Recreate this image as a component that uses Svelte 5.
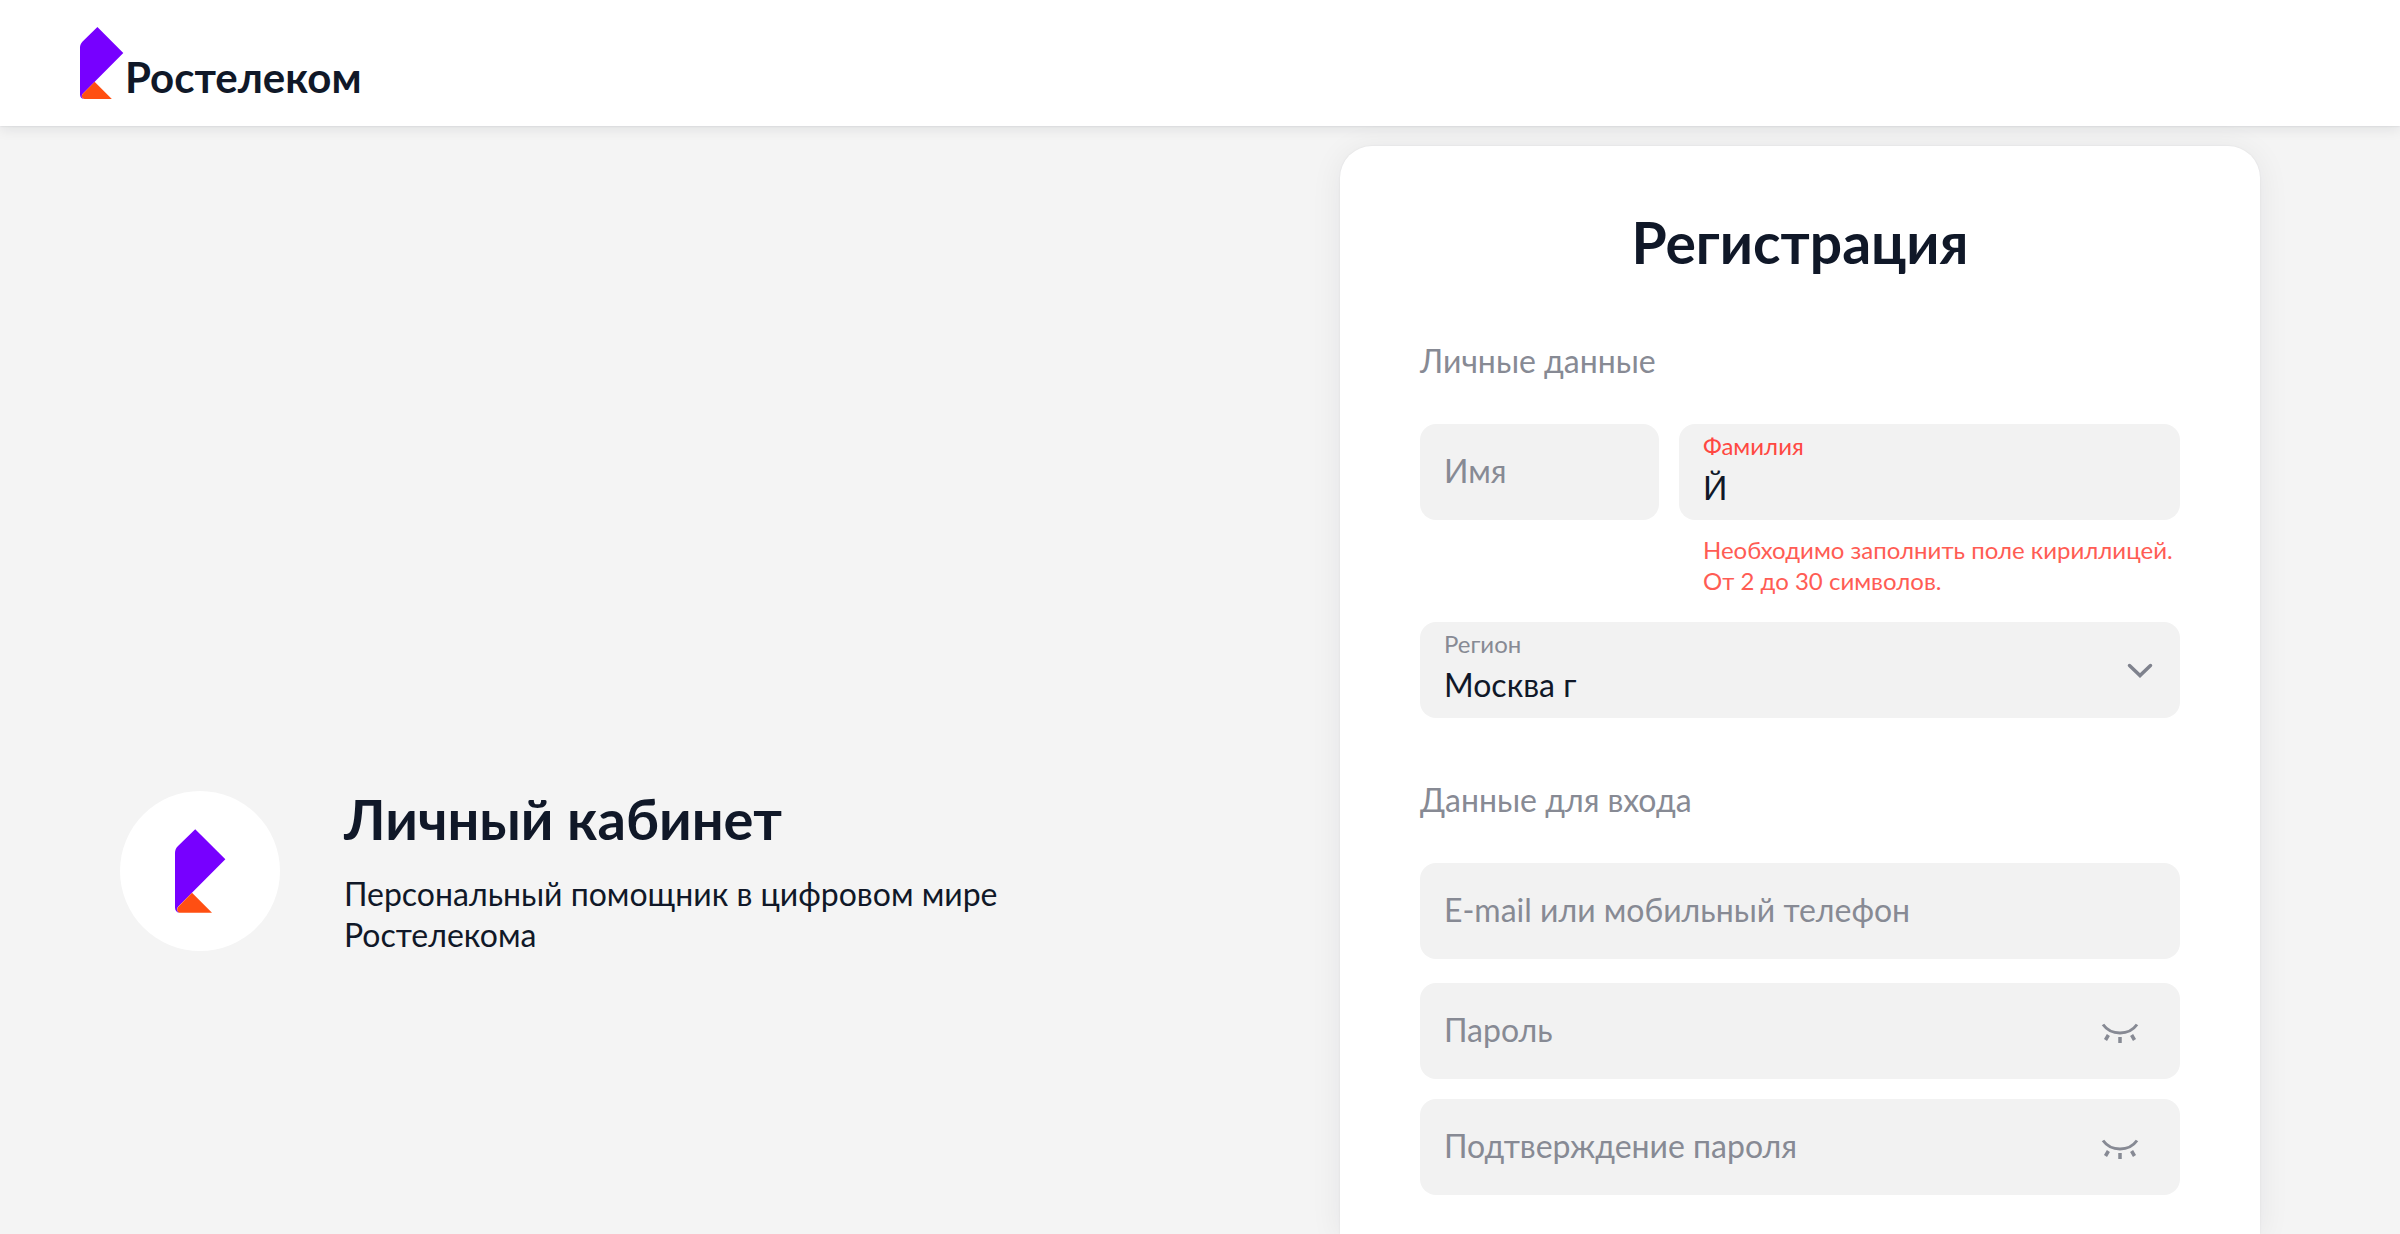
<script>
  let firstName = $state('');
  let lastName = $state('Й');
  let region = $state('Москва г');
  let login = $state('');
  let password = $state('');
  let passwordRepeat = $state('');
  let showPassword = $state(false);
  let showRepeat = $state(false);
</script>

{#snippet mark()}
  <svg class="mark" viewBox="0 0 43 72" aria-hidden="true">
    <path fill="#7700ff" d="M17.4 0 43.3 26 3 66.4c-2 2-1.4 4.2.6 5.6C1.4 71.6 0 69.8 0 67.4V20.8c0-2.6.8-4.6 2.6-6.4z" />
    <path fill="#ff4f12" d="M14.6 54.700 31.800 72H4.600c-2.600 0-3.600-3-1.800-5.200z" />
  </svg>
{/snippet}

{#snippet eye()}
  <svg viewBox="0 0 48 48" fill="none" stroke="#878a94" aria-hidden="true">
    <path stroke-width="3" d="M7 17.5C15 28.8 33 28.8 41 17.5" />
    <path stroke-width="3.5" d="M24 30v6M12.4 28 9.5 33M35.6 28 38.5 33" />
  </svg>
{/snippet}

<div class="page">
  <header class="header">
    <a class="logo" href="/">
      {@render mark()}
      <span>Ростелеком</span>
    </a>
  </header>

  <main class="main">
    <section class="about">
      <div class="badge">{@render mark()}</div>
      <div class="about-text">
        <h2>Личный кабинет</h2>
        <p>Персональный помощник в цифровом мире Ростелекома</p>
      </div>
    </section>

    <section class="card">
      <h1>Регистрация</h1>
      <form>
        <h3>Личные данные</h3>
        <div class="names">
          <div class="field">
            <input type="text" aria-label="Имя" placeholder="Имя" bind:value={firstName} />
          </div>
          <div>
            <div class="field filled invalid">
              <div class="stack">
                <label for="last-name">Фамилия</label>
                <input id="last-name" type="text" aria-describedby="last-name-error" bind:value={lastName} />
              </div>
            </div>
            <p class="error" id="last-name-error">Необходимо заполнить поле кириллицей. От 2 до 30 символов.</p>
          </div>
        </div>
        <div class="field filled">
          <div class="stack">
            <label for="region">Регион</label>
            <select id="region" bind:value={region}>
              <option>Москва г</option>
            </select>
          </div>
          <svg class="chevron" viewBox="0 0 32 32" fill="none" stroke="#7f828d" stroke-width="3.5" stroke-linecap="round" aria-hidden="true">
            <path d="M5.5 11.5 16 21.5 26.5 11.5" />
          </svg>
        </div>

        <h3 class="second">Данные для входа</h3>
        <div class="field">
          <input type="text" aria-label="E-mail или мобильный телефон" placeholder="E-mail или мобильный телефон" bind:value={login} />
        </div>
        <div class="passwords">
          <div class="field">
            <input type={showPassword ? 'text' : 'password'} aria-label="Пароль" placeholder="Пароль" bind:value={password} />
            <button type="button" aria-label="Показать пароль" onclick={() => (showPassword = !showPassword)}>{@render eye()}</button>
          </div>
          <div class="field">
            <input type={showRepeat ? 'text' : 'password'} aria-label="Подтверждение пароля" placeholder="Подтверждение пароля" bind:value={passwordRepeat} />
            <button type="button" aria-label="Показать подтверждение пароля" onclick={() => (showRepeat = !showRepeat)}>{@render eye()}</button>
          </div>
        </div>
      </form>
    </section>
  </main>
</div>

<style>
  :global(body) {
    background: #f4f4f4;
  }

  .page {
    box-sizing: border-box;
    display: flex;
    flex-direction: column;
    height: 100vh;
    overflow: hidden;
    background: #f4f4f4;
    color: #101828;
    font-family: Lato, 'Liberation Sans', sans-serif;
    font-size: 32px;
    line-height: 40px;
  }

  h1, h2, h3, p {
    margin: 0;
  }

  .header {
    position: relative;
    z-index: 1;
    flex: none;
    display: flex;
    padding: 27px 80px;
    background: #fff;
    box-shadow: 0 4px 12px rgba(16, 24, 40, 0.08), 0 0 2px rgba(16, 24, 40, 0.12);
  }

  .logo {
    display: flex;
    align-items: flex-end;
    gap: 2px;
    color: inherit;
    font-size: 42px;
    font-weight: 700;
    line-height: 44px;
    text-decoration: none;
  }

  .mark {
    display: block;
    width: 43px;
    height: 72px;
    overflow: visible;
  }

  .main {
    flex: 1;
    min-height: 0;
    display: flex;
    align-items: stretch;
    justify-content: space-between;
    padding: 20px 140px 0 120px;
  }

  .about {
    align-self: flex-end;
    display: flex;
    align-items: center;
    gap: 64px;
    padding-bottom: 279px;
  }

  .badge {
    flex: none;
    display: flex;
    align-items: center;
    justify-content: center;
    width: 160px;
    height: 160px;
    border-radius: 50%;
    background: #fff;
  }

  .badge .mark {
    width: 50px;
    height: 84px;
  }

  .about-text {
    max-width: 720px;
  }

  h1, h2 {
    font-size: 56px;
    font-weight: 700;
    line-height: 64px;
  }

  h2 {
    margin-bottom: 22px;
  }

  .about p {
    line-height: 41px;
  }

  .card {
    flex: none;
    box-sizing: border-box;
    width: 43%;
    max-width: 920px;
    padding: 64px 80px;
    border-radius: 32px 32px 0 0;
    background: #fff;
    box-shadow: 0 4px 32px rgba(16, 24, 40, 0.07), 0 0 2px rgba(16, 24, 40, 0.08);
  }

  h1 {
    font-size: 57px;
    text-align: center;
  }

  h3 {
    margin: 67px 0 43px;
    color: #878a94;
    font-size: 32px;
    font-weight: 400;
    line-height: 40px;
  }

  .second {
    margin-top: 62px;
  }

  .names {
    display: grid;
    grid-template-columns: 239fr 501fr;
    align-items: start;
    gap: 20px;
    margin-bottom: 26px;
  }

  .field {
    box-sizing: border-box;
    display: flex;
    align-items: center;
    min-height: 96px;
    padding: 0 24px;
    border-radius: 16px;
    background: #f2f2f2;
  }

  input, select {
    box-sizing: border-box;
    flex: 1;
    width: 100%;
    min-width: 0;
    height: 96px;
    margin: 0;
    padding: 0 0 4px;
    border: 0;
    outline: 0;
    appearance: none;
    background: none;
    color: #101828;
    font: inherit;
  }

  input::placeholder {
    color: #878a94;
    opacity: 1;
  }

  .filled {
    align-items: stretch;
  }

  .stack {
    flex: 1;
    min-width: 0;
    display: flex;
    flex-direction: column;
    padding: 6px 0;
  }

  .stack label {
    color: #878a94;
    font-size: 24px;
    line-height: 32px;
  }

  .stack input, .stack select {
    flex: none;
    height: 50px;
    padding: 0;
  }

  .invalid label {
    color: #ff4842;
  }

  .error {
    margin-top: 14px;
    padding-left: 24px;
    color: #ff5c54;
    font-size: 24px;
    line-height: 31px;
  }

  .chevron {
    flex: none;
    align-self: center;
    width: 32px;
    height: 32px;
  }

  .passwords {
    display: grid;
    gap: 20px;
    margin-top: 24px;
  }

  button {
    flex: none;
    width: 48px;
    height: 48px;
    margin-right: 12px;
    padding: 0;
    border: 0;
    background: none;
    cursor: pointer;
  }

  button svg {
    display: block;
    width: 48px;
    height: 48px;
  }
</style>
